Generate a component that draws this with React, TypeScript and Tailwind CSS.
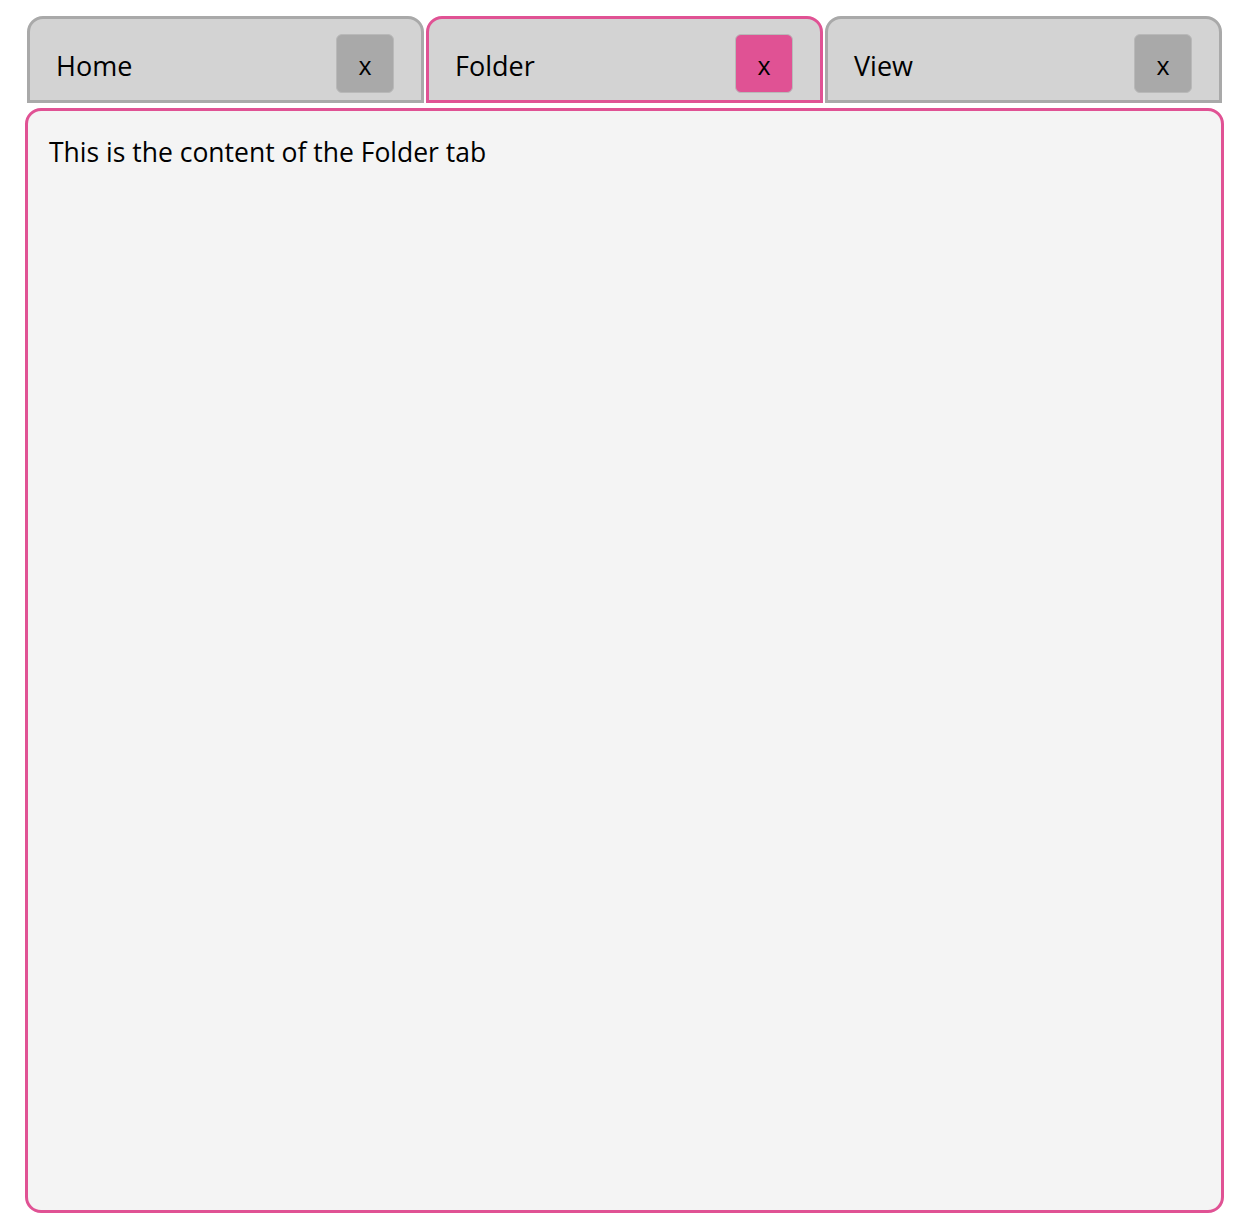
import { useState } from "react";

type Tab = { id: string; label: string };

const tabs: Tab[] = [
  { id: "home", label: "Home" },
  { id: "folder", label: "Folder" },
  { id: "view", label: "View" }
];

export default function App() {
  const [active, setActive] = useState("folder");
  const activeTab = tabs.find((t) => t.id === active) ?? tabs[0];

  return (
    <div
      className="bg-white pt-[16px] pr-[22px] pb-[19px] pl-[25px] text-black"
      style={{ fontFamily: '"Open Sans", "Noto Sans", sans-serif' }}
    >
      <div className="flex gap-[2px] px-[2px]">
        {tabs.map((tab) => {
          const isActive = tab.id === active;
          return (
            <div
              key={tab.id}
              onClick={() => setActive(tab.id)}
              className={`flex h-[87px] flex-1 cursor-pointer items-center justify-between rounded-t-[16px] border-[3px] bg-[#d3d3d3] pt-[8px] pr-[27px] pl-[26px] ${
                isActive ? "border-[#e05294]" : "border-[#a9a9a9]"
              }`}
            >
              <span className="pt-[4px] text-[27px] leading-none">{tab.label}</span>
              <button
                type="button"
                className={`flex h-[59px] w-[58px] items-center justify-center rounded-[6px] border border-[#b9b9b9] pt-[3px] text-[25px] leading-none ${
                  isActive ? "bg-[#e05294]" : "bg-[#a9a9a9]"
                }`}
              >
                x
              </button>
            </div>
          );
        })}
      </div>
      <div className="mt-[5px] h-[1105px] rounded-[16px] border-[3px] border-[#e05294] bg-[#f4f4f4] px-[21px] pt-[28px]">
        <p className="text-[26.5px] leading-none">
          This is the content of the {activeTab.label} tab
        </p>
      </div>
    </div>
  );
}
